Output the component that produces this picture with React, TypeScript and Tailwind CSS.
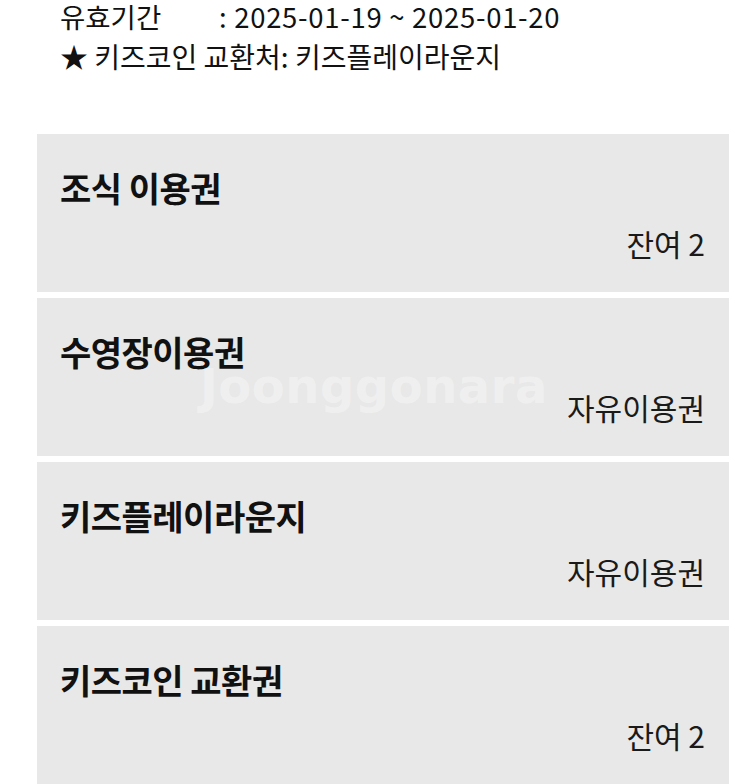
const items = [
  { title: '조식 이용권', value: '잔여 2' },
  { title: '수영장이용권', value: '자유이용권' },
  { title: '키즈플레이라운지', value: '자유이용권' },
  { title: '키즈코인 교환권', value: '잔여 2' },
]

export default function App() {
  return (
    <div
      className="relative w-[750px] h-[784px] overflow-hidden bg-white text-[#111]"
      style={{ fontFamily: '"Noto Sans CJK KR", "Noto Sans", sans-serif' }}
    >
      <div className="pl-[60px]">
        <div className="flex items-center h-[34px] text-[27.5px] leading-none">
          <span className="w-[159px]">유효기간</span>
          <span className="tracking-[0.7px]">: 2025-01-19 ~ 2025-01-20</span>
        </div>
        <div className="flex items-center h-[44px] text-[28px] leading-none">
          ★ 키즈코인 교환처: 키즈플레이라운지
        </div>
      </div>

      <div className="mt-[56px] ml-[37px] w-[692px] flex flex-col gap-[6px]">
        {items.map((item) => (
          <div key={item.title} className="h-[158px] bg-[#e8e8e8] pl-[23px] pr-[24px] flex flex-col">
            <div className="mt-[35px] h-[38px] flex items-center text-[34px] font-bold leading-none tracking-[-0.5px]">
              {item.title}
            </div>
            <div className="mt-[17px] h-[38px] flex items-center justify-end text-[30px] leading-none text-[#1a1a1a]">
              {item.value}
            </div>
          </div>
        ))}
      </div>

      <div
        className="absolute left-[200px] top-[362px] text-[48px] font-bold leading-none text-white/35 tracking-[0.5px] select-none"
        style={{ fontFamily: '"DejaVu Sans", sans-serif' }}
      >
        Joonggonara
      </div>
    </div>
  )
}
